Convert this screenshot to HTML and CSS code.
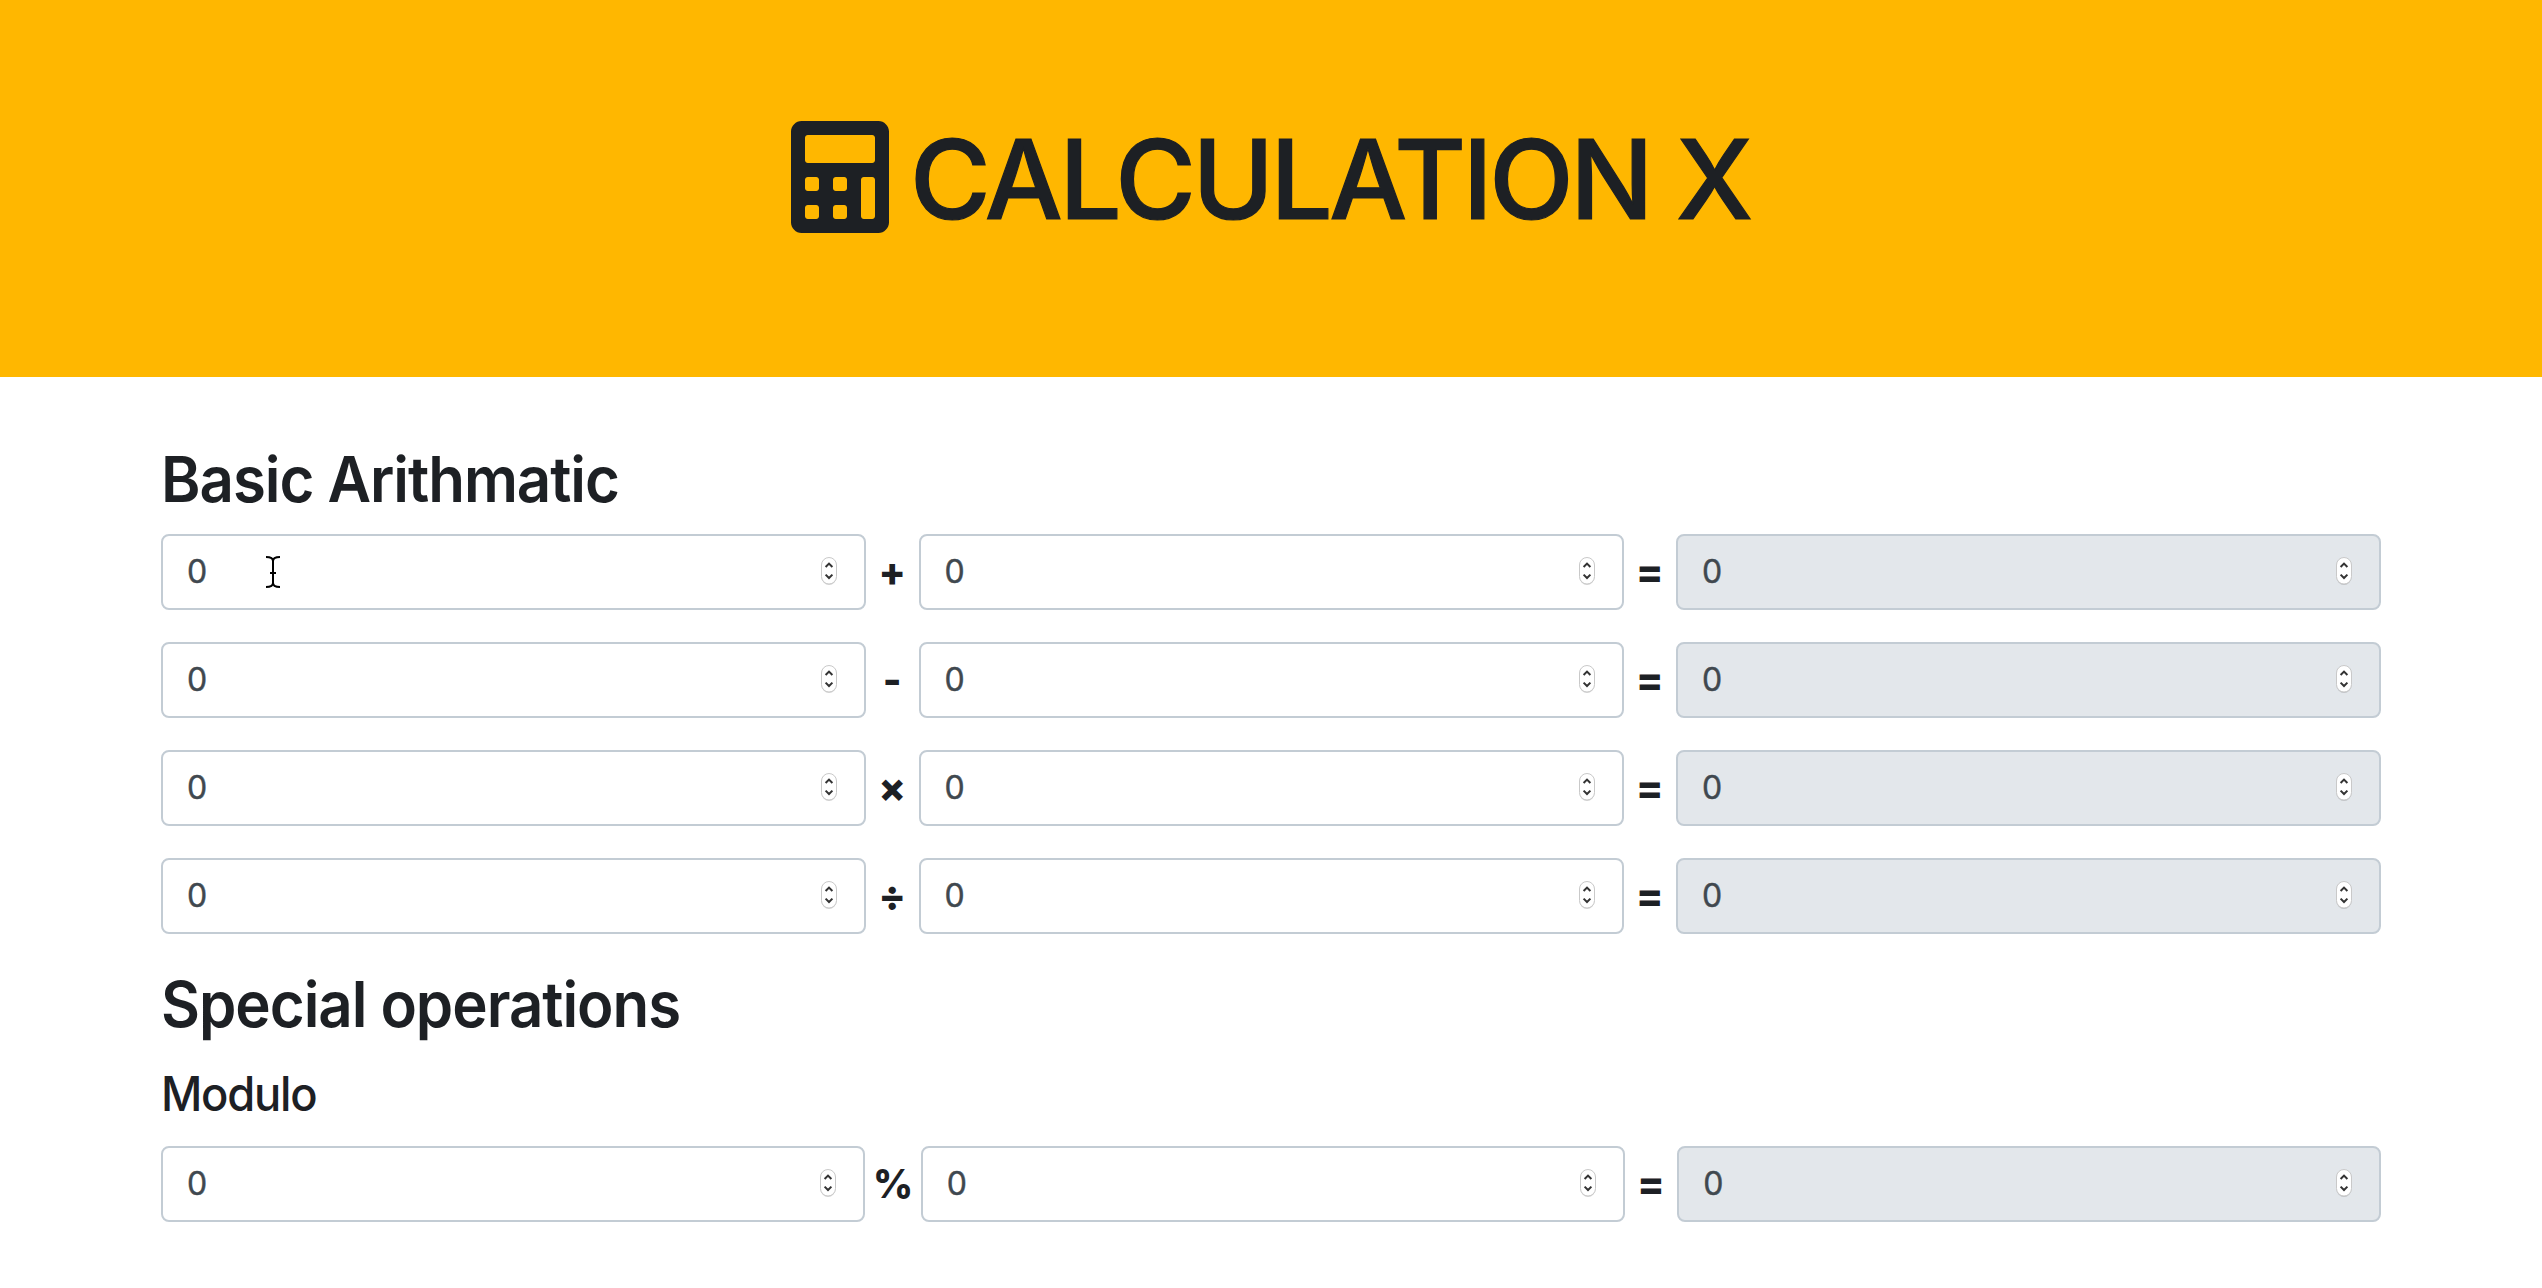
FILE: index.html
```html
<!DOCTYPE html>
<html lang="en">
<head>
<meta charset="utf-8">
<title>Calculation X</title>
<link rel="stylesheet" href="styles.css">
</head>
<body>
<svg class="defs" width="0" height="0" aria-hidden="true">
  <symbol id="stepper" viewBox="0 0 20 32">
    <rect x="2.5" y="3" width="15" height="27" rx="7.5" fill="#000" opacity=".16"/>
    <rect x="2.5" y="2.5" width="15" height="26.5" rx="7.5" fill="#fff" stroke="#c9c9c9"/>
    <path d="M6.6 12l3.4-3.4 3.4 3.4M6.6 19.6l3.4 3.4 3.4-3.4" fill="none" stroke="#333" stroke-width="2"/>
  </symbol>
</svg>
<header class="hero">
  <h1 class="hero-title">
    <svg class="hero-icon" viewBox="0 0 448 512" aria-hidden="true"><path fill="currentColor" d="M400 0H48C22.4 0 0 22.4 0 48v416c0 25.6 22.4 48 48 48h352c25.6 0 48-22.4 48-48V48c0-25.6-22.4-48-48-48zM128 435.2c0 6.4-6.4 12.8-12.8 12.8H76.8c-6.4 0-12.8-6.4-12.8-12.8v-38.4c0-6.4 6.4-12.8 12.8-12.8h38.4c6.4 0 12.8 6.4 12.8 12.8v38.4zm0-128c0 6.4-6.4 12.8-12.8 12.8H76.8c-6.4 0-12.8-6.4-12.8-12.8v-38.4c0-6.4 6.4-12.8 12.8-12.8h38.4c6.4 0 12.8 6.4 12.8 12.8v38.4zm128 128c0 6.4-6.4 12.8-12.8 12.8h-38.4c-6.4 0-12.8-6.4-12.8-12.8v-38.4c0-6.4 6.4-12.8 12.8-12.8h38.4c6.4 0 12.8 6.4 12.8 12.8v38.4zm0-128c0 6.4-6.4 12.8-12.8 12.8h-38.4c-6.4 0-12.8-6.4-12.8-12.8v-38.4c0-6.4 6.4-12.8 12.8-12.8h38.4c6.4 0 12.8 6.4 12.8 12.8v38.4zm128 128c0 6.4-6.4 12.8-12.8 12.8h-38.4c-6.4 0-12.8-6.4-12.8-12.8V268.800c0-6.4 6.4-12.8 12.8-12.8h38.4c6.4 0 12.8 6.4 12.8 12.8v166.400zm0-256c0 6.4-6.4 12.8-12.8 12.8H76.8c-6.4 0-12.8-6.4-12.8-12.8V76.800C64 70.4 70.4 64 76.8 64h294.400c6.4 0 12.8 6.4 12.8 12.8v102.400z"/></svg>
    <span class="hero-text">CALCULATION X</span>
  </h1>
</header>
<main class="container">
  <h2 class="section-title basic">Basic Arithmatic</h2>
  <div class="row">
    <div class="field"><span class="value">0</span><svg class="caret" viewBox="0 0 16 34" aria-hidden="true"><path d="M1 2c4 0 7 1 7 4v22c0 3-3 4-7 4M15 2c-4 0-7 1-7 4v22c0 3 3 4 7 4M5 18h6"/></svg><svg class="stepper"><use href="#stepper"/></svg></div>
    <b class="op">+</b>
    <div class="field"><span class="value">0</span><svg class="stepper"><use href="#stepper"/></svg></div>
    <b class="op">=</b>
    <div class="field result"><span class="value">0</span><svg class="stepper"><use href="#stepper"/></svg></div>
  </div>
  <div class="row">
    <div class="field"><span class="value">0</span><svg class="stepper"><use href="#stepper"/></svg></div>
    <b class="op">-</b>
    <div class="field"><span class="value">0</span><svg class="stepper"><use href="#stepper"/></svg></div>
    <b class="op">=</b>
    <div class="field result"><span class="value">0</span><svg class="stepper"><use href="#stepper"/></svg></div>
  </div>
  <div class="row">
    <div class="field"><span class="value">0</span><svg class="stepper"><use href="#stepper"/></svg></div>
    <b class="op">×</b>
    <div class="field"><span class="value">0</span><svg class="stepper"><use href="#stepper"/></svg></div>
    <b class="op">=</b>
    <div class="field result"><span class="value">0</span><svg class="stepper"><use href="#stepper"/></svg></div>
  </div>
  <div class="row">
    <div class="field"><span class="value">0</span><svg class="stepper"><use href="#stepper"/></svg></div>
    <b class="op">÷</b>
    <div class="field"><span class="value">0</span><svg class="stepper"><use href="#stepper"/></svg></div>
    <b class="op">=</b>
    <div class="field result"><span class="value">0</span><svg class="stepper"><use href="#stepper"/></svg></div>
  </div>
  <h2 class="section-title special">Special operations</h2>
  <h3 class="sub-title">Modulo</h3>
  <div class="row">
    <div class="field"><span class="value">0</span><svg class="stepper"><use href="#stepper"/></svg></div>
    <b class="op percent">%</b>
    <div class="field"><span class="value">0</span><svg class="stepper"><use href="#stepper"/></svg></div>
    <b class="op">=</b>
    <div class="field result"><span class="value">0</span><svg class="stepper"><use href="#stepper"/></svg></div>
  </div>
</main>
</body>
</html>
```
FILE: styles.css
```css
* { box-sizing: border-box; }
body {
  margin: 0;
  background: #fff;
  color: #1d2024;
  font-family: Inter, "Liberation Sans", sans-serif;
  overflow: hidden;
}
h1, h2, h3 { margin: 0; font-weight: 500; white-space: nowrap; }
.defs { display: block; width: 0; height: 0; }
.hero { height: 377px; background: #ffb700; padding: 112px 0 0 791px; }
.hero-title { display: flex; align-items: flex-start; font-size: 110px; line-height: 134px; }
.hero-icon { width: 98px; height: 112px; margin-top: 9px; flex: none; }
.hero-text { margin-left: 21px; letter-spacing: -3.4px; -webkit-text-stroke: 1.2px currentColor; }
.container { width: 2220px; margin: 0 auto; padding-top: 64px; }
.section-title {
  font-size: 63px;
  line-height: 77px;
  font-weight: 600;
  letter-spacing: -1.1px;
  transform: scaleX(.952);
  transform-origin: 0 0;
}
.basic { margin-bottom: 16px; height: 77px; }
.special { margin-top: 32px; }
.sub-title {
  font-size: 48px;
  line-height: 58px;
  margin: 22px 0 23px;
  letter-spacing: -1.3px;
  transform: scaleX(.944);
  transform-origin: 0 0;
}
.row { display: flex; margin-bottom: 32px; }
.field {
  flex: 1;
  display: flex;
  align-items: center;
  height: 76px;
  border: 2px solid #c3ccd4;
  border-radius: 8px;
  padding: 0 25px 0 24px;
  background: #fff;
}
.result { background: #e3e7eb; }
.value { font-size: 32px; line-height: 48px; color: #40484f; -webkit-text-stroke: .4px #40484f; }
.stepper { width: 20px; height: 32px; margin-left: auto; margin-top: -3px; flex: none; }
.caret { width: 16px; height: 34px; margin-left: 58px; flex: none; fill: none; stroke: #000; stroke-width: 2; }
.op { width: 52.5px; text-align: center; font-size: 40px; line-height: 76px; height: 76px; font-weight: 800; }
.percent { width: 56px; font-size: 39px; font-weight: 800; letter-spacing: -.5px; }
```
